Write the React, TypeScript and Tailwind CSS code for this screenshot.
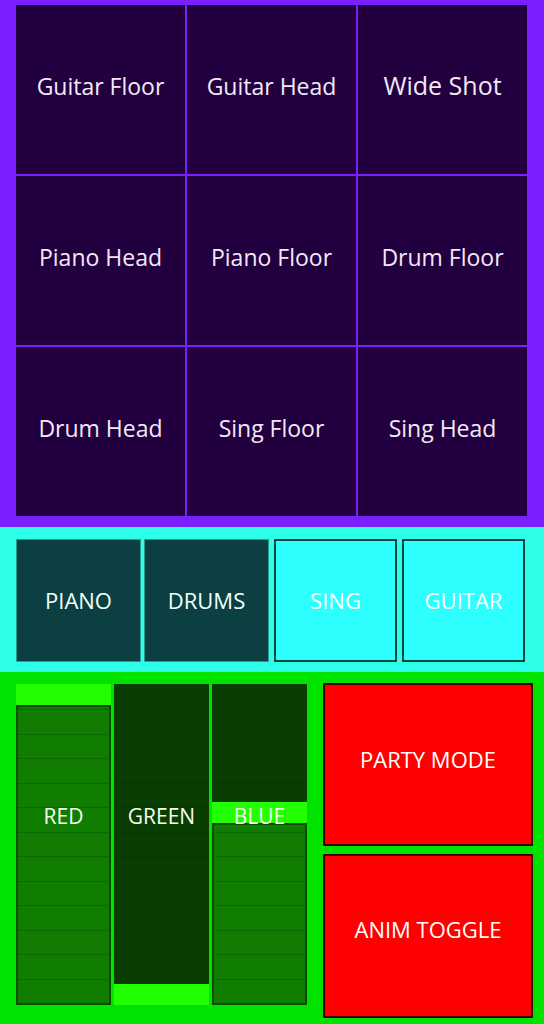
import React from "react";

const cams = [
  { label: "Guitar Floor", big: false },
  { label: "Guitar Head", big: false },
  { label: "Wide Shot", big: true },
  { label: "Piano Head", big: false },
  { label: "Piano Floor", big: false },
  { label: "Drum Floor", big: false },
  { label: "Drum Head", big: false },
  { label: "Sing Floor", big: false },
  { label: "Sing Head", big: false },
];

const modes = [
  { label: "PIANO", on: false },
  { label: "DRUMS", on: false },
  { label: "SING", on: true },
  { label: "GUITAR", on: true },
];

// pos = thumb offset from top of the 321px track
const sliders = [
  { label: "RED", pos: 0 },
  { label: "GREEN", pos: 300 },
  { label: "BLUE", pos: 118 },
];

function Lines({ dark }: { dark: boolean }) {
  return (
    <div className="pointer-events-none absolute inset-x-0 top-[2px] h-[317px] flex flex-col">
      {Array.from({ length: 13 }).map((_, i) => (
        <div
          key={i}
          className={
            "flex-1 " +
            (i === 0 ? "" : dark ? "border-t border-[#093600]" : "border-t border-[#0c6800]")
          }
        />
      ))}
    </div>
  );
}

function Slider({ label, pos }: { label: string; pos: number }) {
  const thumb = 21;
  const rest = 321 - pos - thumb;
  return (
    <div className="relative h-[321px] w-[95px]">
      {pos > 0 && (
        <div className="absolute inset-x-0 top-0 overflow-hidden bg-[#0a3d00]" style={{ height: pos }}>
          <Lines dark />
        </div>
      )}
      <div className="absolute inset-x-0 bg-[#22ff00]" style={{ top: pos, height: thumb }} />
      {rest > 0 && (
        <div
          className="absolute inset-x-0 bottom-0 overflow-hidden border-2 border-[#0a4d00] bg-[#107c00]"
          style={{ top: pos + thumb }}
        >
          <div className="absolute inset-x-0 bottom-[-2px] h-[321px]">
            <Lines dark={false} />
          </div>
        </div>
      )}
      <div className="absolute inset-x-0 top-[118px] text-center text-[21px] leading-7 text-[#f4fff0]">
        {label}
      </div>
    </div>
  );
}

export default function App() {
  return (
    <div className="w-[544px] h-[1024px] overflow-hidden font-['Open_Sans',sans-serif]">
      {/* Camera grid */}
      <div className="bg-[#7a1fff] pl-[16px] pr-[17px] pt-[5px] pb-[11px]">
        <div className="grid grid-cols-3 gap-[2px]">
          {cams.map((c) => (
            <div
              key={c.label}
              className={
                "flex h-[169px] items-center justify-center bg-[#22003f] pb-[7px] text-[#f2e8f6] " +
                (c.big ? "text-[25px]" : "text-[23px]")
              }
            >
              {c.label}
            </div>
          ))}
        </div>
      </div>

      {/* Instrument modes */}
      <div className="bg-[#2dffe8] pl-[16px] pr-[19px] pt-[12px] pb-[10px]">
        <div className="grid grid-cols-4 gap-[3px]">
          {modes.map((m) =>
            m.on ? (
              <div
                key={m.label}
                className="ml-[2px] flex h-[123px] items-center justify-center border-2 border-[#0c4444] bg-[#2dffff] text-[22px] text-white"
              >
                {m.label}
              </div>
            ) : (
              <div
                key={m.label}
                className="flex h-[123px] items-center justify-center border border-[#2a9a92] bg-[#0c3f41] text-[22px] text-[#f2fffe]"
              >
                {m.label}
              </div>
            )
          )}
        </div>
      </div>

      {/* Lights */}
      <div className="flex h-[352px] bg-[#00e300] pl-[16px] pr-[11px] pt-[11px]">
        <div className="mt-[1px] flex gap-[3px]">
          {sliders.map((s) => (
            <Slider key={s.label} label={s.label} pos={s.pos} />
          ))}
        </div>
        <div className="ml-[16px] flex flex-1 flex-col gap-[8px]">
          <div className="flex h-[163px] items-center justify-center border-2 border-[#3a0000] bg-[#ff0000] pb-[11px] text-[22px] text-white">
            PARTY MODE
          </div>
          <div className="flex h-[164px] items-center justify-center border-2 border-[#3a0000] bg-[#ff0000] pb-[13px] text-[22px] text-white">
            ANIM TOGGLE
          </div>
        </div>
      </div>
    </div>
  );
}
